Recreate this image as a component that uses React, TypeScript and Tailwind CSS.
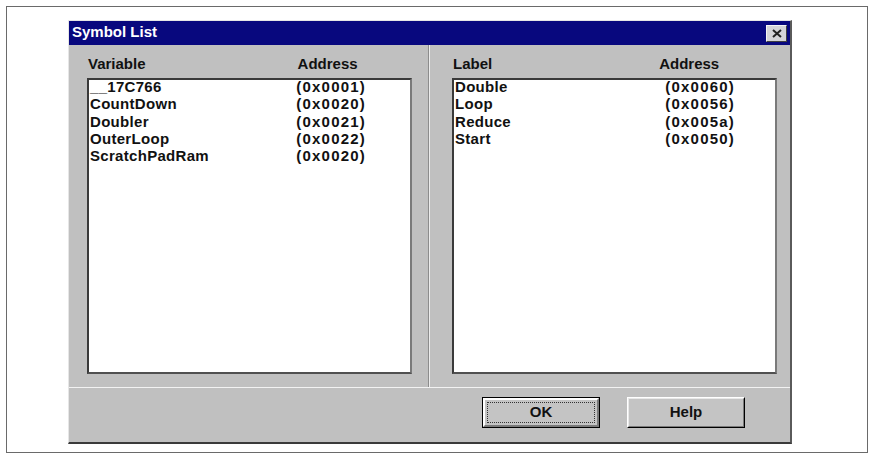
import React from 'react';

const font = { fontFamily: '"Liberation Sans", Arial, sans-serif' };

const variables = [
  { name: '__17C766', addr: '(0x0001)' },
  { name: 'CountDown', addr: '(0x0020)' },
  { name: 'Doubler', addr: '(0x0021)' },
  { name: 'OuterLoop', addr: '(0x0022)' },
  { name: 'ScratchPadRam', addr: '(0x0020)' },
];

const labels = [
  { name: 'Double', addr: '(0x0060)' },
  { name: 'Loop', addr: '(0x0056)' },
  { name: 'Reduce', addr: '(0x005a)' },
  { name: 'Start', addr: '(0x0050)' },
];

type Row = { name: string; addr: string };

function SymbolPanel({
  title,
  rows,
  headAddr,
  rowAddr,
}: {
  title: string;
  rows: Row[];
  headAddr: string;
  rowAddr: string;
}) {
  return (
    <div className="flex flex-col">
      <div className="flex h-[17px] items-center text-[15px] font-bold leading-[17px] text-[#111]">
        <span className="pl-[1px]">{title}</span>
        <span className={headAddr}>Address</span>
      </div>
      <div className="mt-[6px] h-[296px] w-[325px] border-2 border-t-[#3a3a3a] border-l-[#3a3a3a] border-r-[#7a7a7a] border-b-[#505050] bg-white pl-[1px]">
        {rows.map((r) => (
          <div key={r.name} className="flex h-[17.3px] items-start text-[15px] font-bold leading-[14px] text-[#111]">
            <span className="tracking-[0.3px]">{r.name}</span>
            <span className={rowAddr}>{r.addr}</span>
          </div>
        ))}
      </div>
    </div>
  );
}

export default function App() {
  return (
    <div className="h-[454px] w-[873px] bg-white pl-[6px] pt-[6px]" style={font}>
      <div className="h-[447px] w-[862px] border border-[#6a6a6a] pl-[61px] pt-[13px]">
        <div className="flex h-[424px] w-[724px] flex-col border-t border-l border-[#e6e6e6] border-r-2 border-b-2 border-r-[#5a5a5a] border-b-[#3a3a3a] bg-[#c0c0c0]">
          {/* title bar */}
          <div className="flex h-[24px] items-center justify-between bg-[#08087e] pl-[3px] pr-[3px]">
            <span className="mb-[3px] text-[15px] font-bold leading-none text-white">Symbol List</span>
            <div className="flex h-[17px] w-[21px] items-center justify-center border border-t-[#f4f4f4] border-l-[#f4f4f4] border-r-[#404040] border-b-[#404040] bg-[#d4d4d8]">
              <svg width="10" height="9" viewBox="0 0 10 9">
                <path d="M1 1 L9 8 M9 1 L1 8" stroke="#222" strokeWidth="2" />
              </svg>
            </div>
          </div>

          {/* panels */}
          <div className="flex h-[342px]">
            <div className="w-[360px] border-r border-[#8c8c8c] pl-[18px] pt-[10px]">
              <SymbolPanel
                title="Variable"
                rows={variables}
                headAddr="ml-[152px]"
                rowAddr="ml-auto mr-[44px] tracking-[1.2px]"
              />
            </div>
            <div className="flex-1 border-l border-[#ececec] pl-[22px] pt-[10px]">
              <SymbolPanel
                title="Label"
                rows={labels}
                headAddr="ml-[167px]"
                rowAddr="ml-auto mr-[40px] tracking-[1.2px]"
              />
            </div>
          </div>

          {/* buttons */}
          <div className="flex flex-1 items-start justify-end gap-[27px] border-t border-t-[#f2f2f2] pr-[45px] pt-[9px]">
            <button className="h-[31px] w-[118px] border border-black bg-[#c4c4c4] p-0">
              <div className="h-full w-full border-2 border-t-white border-l-white border-r-[#7a7a7a] border-b-[#7a7a7a] p-[2px]">
                <div className="flex h-full w-full items-center justify-center border border-dotted border-[#333] text-[15px] font-bold text-[#111]">
                  OK
                </div>
              </div>
            </button>
            <button className="h-[31px] w-[118px] border border-t-white border-l-white border-r-black border-b-black bg-[#c4c4c4] p-0">
              <div className="flex h-full w-full items-center justify-center border border-t-[#e8e8e8] border-l-[#e8e8e8] border-r-[#7a7a7a] border-b-[#7a7a7a] text-[15px] font-bold text-[#111]">
                Help
              </div>
            </button>
          </div>
        </div>
      </div>
    </div>
  );
}
